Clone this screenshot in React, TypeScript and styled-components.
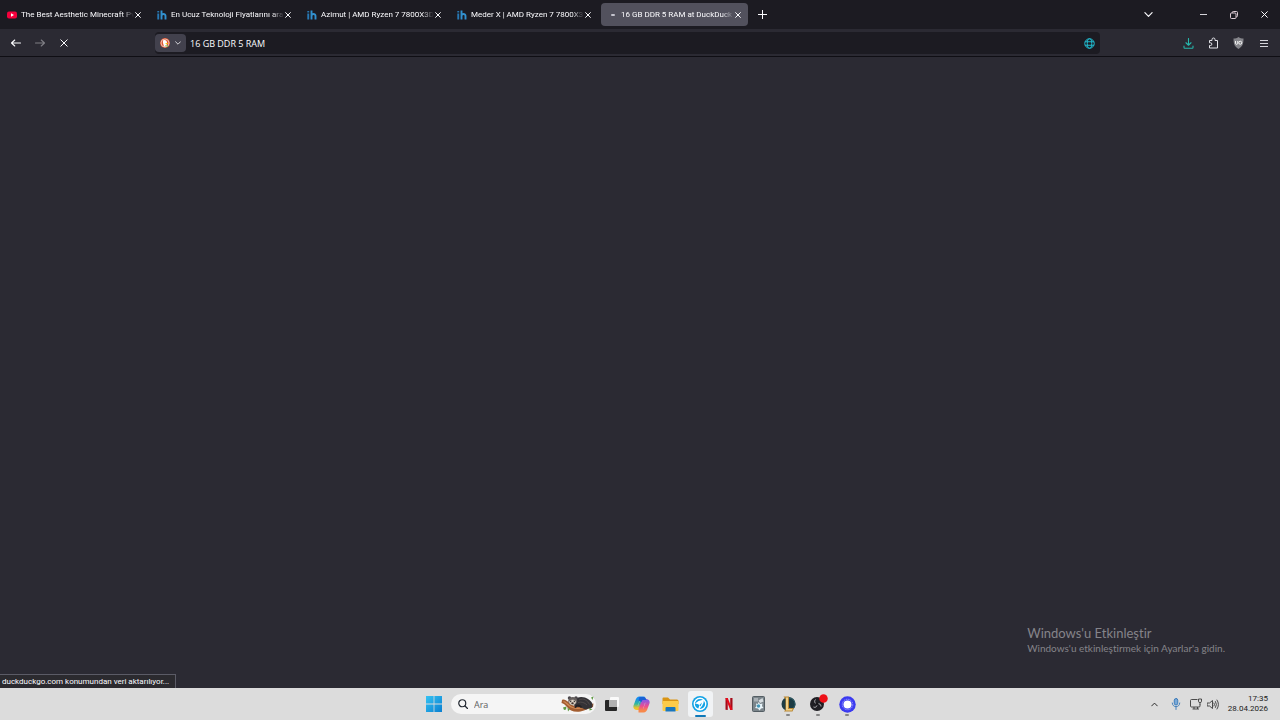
import React from "react";
import styled, { createGlobalStyle, css } from "styled-components";

const GlobalStyle = createGlobalStyle`
  *, *::before, *::after { box-sizing: border-box; }
  body { margin: 0; background: #2b2a33; }
  body, button { font-family: Roboto, "Open Sans", sans-serif; }
  input { font-family: "Open Sans", "Noto Sans", sans-serif; }
  button { margin: 0; padding: 0; border: 0; background: none; color: inherit; cursor: default; }
  svg { display: block; flex: none; }
`;

const Screen = styled.div`
  display: flex;
  flex-direction: column;
  min-height: 100vh;
  color: #fbfbfe;
  overflow: hidden;
`;

const TabBar = styled.header`
  display: flex;
  align-items: center;
  height: 29px;
  padding: 0 1px;
  background: #1c1b22;
`;

const TabList = styled.div`
  display: flex;
  gap: 3px;
  min-width: 0;
`;

const Tab = styled.div<{ $selected?: boolean }>`
  display: flex;
  align-items: center;
  width: 147px;
  height: 23px;
  padding: 0 6px;
  border-radius: 4px;
  font-size: 8px;
  background: ${(p) => (p.$selected ? "#52515d" : "transparent")};
`;

const TabLabel = styled.span`
  flex: 1;
  min-width: 0;
  margin-left: 4px;
  overflow: hidden;
  white-space: nowrap;
  line-height: 16px;
  mask-image: linear-gradient(to left, transparent, #000 12px);
`;

const IconButton = styled.button<{ $w?: number; $dim?: boolean }>`
  display: flex;
  align-items: center;
  justify-content: center;
  flex: none;
  width: ${(p) => p.$w ?? 24}px;
  height: 24px;
  opacity: ${(p) => (p.$dim ? 0.4 : 1)};
`;

const WindowControls = styled.div`
  display: flex;
  align-items: center;
  margin-left: auto;
`;

const ListAllTabs = styled(IconButton)`
  margin-right: 28px;
`;

const NavBar = styled.nav`
  display: flex;
  align-items: center;
  height: 28px;
  padding: 1px 4px 0;
  background: #2b2a33;
  border-bottom: 1px solid #0f0e14;
`;

const ButtonGroup = styled.div`
  display: flex;
  flex: none;
`;

const AddressBar = styled.form`
  display: flex;
  align-items: center;
  flex: 1;
  min-width: 0;
  height: 22px;
  margin: 0 76px 0 79px;
  padding-right: 5px;
  border-radius: 4px;
  background: #1c1b22;
`;

const EngineButton = styled.button`
  display: flex;
  align-items: center;
  justify-content: center;
  gap: 5px;
  width: 31px;
  height: 18px;
  padding-right: 1px;
  border-radius: 4px;
  background: #42414d;
`;

const AddressInput = styled.input`
  flex: 1;
  min-width: 0;
  padding: 0 4px;
  border: 0;
  outline: 0;
  background: none;
  color: #fbfbfe;
  font-size: 9px;
`;

const Page = styled.main`
  position: relative;
  flex: 1;
  background: #2b2a33;
`;

const StatusPanel = styled.div`
  position: absolute;
  left: 0;
  bottom: 0;
  padding: 0 6px 0 2px;
  border: 1px solid #5b5b66;
  border-width: 1px 1px 0 0;
  background: #2b2a2f;
  font-size: 8px;
  line-height: 13px;
`;

const Watermark = styled.aside`
  position: absolute;
  right: 55px;
  bottom: 33px;
  color: #85848a;
  font-family: Lato, "Open Sans", sans-serif;
  font-variant-ligatures: none;
`;

const WatermarkTitle = styled.p`
  margin: 0;
  font-size: 13px;
  line-height: 16px;
`;

const WatermarkText = styled.p`
  margin: 0;
  font-size: 10px;
  line-height: 14px;
`;

const Taskbar = styled.footer`
  display: grid;
  grid-template-columns: 1fr auto 1fr;
  align-items: center;
  height: 32px;
  background: #dcdcdc;
  color: #1b1b1b;
`;

const TaskCenter = styled.div`
  display: flex;
  align-items: center;
  grid-column: 2;
  padding-left: 1px;
`;

const SearchBox = styled.label`
  display: flex;
  align-items: center;
  width: 145px;
  height: 20px;
  margin: 0 1px 0 3px;
  padding: 0 1px 0 7px;
  border-radius: 10px;
  background: #f5f5f5;
`;

const SearchInput = styled.input`
  flex: 1;
  min-width: 0;
  padding: 0 6px;
  border: 0;
  outline: 0;
  background: none;
  font-size: 9px;
  &::placeholder { color: #606060; opacity: 1; }
`;

const AppGrid = styled.div`
  display: grid;
  grid-template-columns: repeat(9, 1fr);
  justify-items: center;
  width: 265px;
`;

const TaskButton = styled.button<{ $active?: boolean; $running?: boolean }>`
  position: relative;
  display: flex;
  align-items: center;
  justify-content: center;
  width: 25px;
  height: 26px;
  border-radius: 3px;
  background: ${(p) => (p.$active ? "#f1f3f5" : "transparent")};
  ${(p) =>
    (p.$active || p.$running) &&
    css`
      &::after {
        content: "";
        position: absolute;
        bottom: ${p.$active ? 0 : 1}px;
        width: ${p.$active ? 11 : 4}px;
        height: 2px;
        border-radius: 1px;
        background: ${p.$active ? "#0f78b8" : "#858585"};
      }
    `}
`;

const Tray = styled.div`
  display: flex;
  align-items: center;
  justify-self: end;
  padding-right: 12px;
`;

const Clock = styled.time`
  margin-left: 6px;
  text-align: right;
  font-size: 8px;
  line-height: 10px;
`;

const Close = ({ size = 6 }: { size?: number }) => (
  <svg width={size} height={size} viewBox="0 0 10 10" stroke="currentColor" strokeWidth={10 / size} strokeLinecap="round">
    <path d="M1 1l8 8M9 1L1 9" />
  </svg>
);

const Chevron = ({ size = 6, up = false }: { size?: number; up?: boolean }) => (
  <svg width={size} height={size} viewBox="0 0 10 10" fill="none" stroke="currentColor" strokeWidth="1.3" strokeLinecap="round" strokeLinejoin="round">
    <path d={up ? "M1 7l4-4 4 4" : "M1 3l4 4 4-4"} />
  </svg>
);

const YouTubeIcon = () => (
  <svg width="10" height="10" viewBox="0 0 20 20">
    <rect y="3" width="20" height="14" rx="4" fill="#f5003c" />
    <path d="M8 6.5v7l6-3.5z" fill="#fff" />
  </svg>
);

const IhIcon = () => (
  <svg width="10" height="10" viewBox="0 0 20 20" fill="none" stroke="#3291d0" strokeWidth="3.8">
    <path d="M2.5 7v12" stroke="#2778b4" />
    <path d="M2.5 2v3" stroke="#2778b4" />
    <path d="M9 1v18M9 12c0-5 8-5.500 8 0v7" />
  </svg>
);

const LoadingIcon = () => (
  <svg width="10" height="10" viewBox="0 0 10 10">
    <rect x="4" y="4" width="4" height="2" rx="1" fill="#c5c4ce" />
  </svg>
);

const Arrow = ({ right = false }: { right?: boolean }) => (
  <svg width="10" height="10" viewBox="0 0 20 20" fill="none" stroke="currentColor" strokeWidth="2.2" strokeLinecap="round" strokeLinejoin="round">
    <path d={right ? "M1 10h18M12.500 4l6.500 6-6.500 6" : "M19 10H1M7.500 4L1 10l6.500 6"} />
  </svg>
);

const DuckIcon = () => (
  <svg width="10" height="10" viewBox="0 0 20 20">
    <circle cx="10" cy="10" r="10" fill="#de5833" />
    <circle cx="10" cy="10" r="8" fill="none" stroke="#f7e4dc" strokeWidth="1.400" />
    <path d="M6 5c4-2.500 8 0 8 4l-1 2 1 6H8C7 13 5 9 6 5z" fill="#fff" />
    <path d="M11 10.500c2-1 4-1 5 0-1 1.500-3 2-5 1.500z" fill="#fdd20a" />
    <path d="M11 14l3 1.500 2-1v2.500l-5-.5z" fill="#4cba3c" />
  </svg>
);

const GlobeIcon = () => (
  <svg width="11" height="11" viewBox="0 0 22 22" fill="none" stroke="#20bcd0" strokeWidth="2">
    <circle cx="11" cy="11" r="9.500" />
    <ellipse cx="11" cy="11" rx="4.500" ry="9.500" />
    <path d="M2 7.500h18M2 14.500h18" />
  </svg>
);

const DownloadIcon = () => (
  <svg width="11" height="11" viewBox="0 0 22 22" fill="none" stroke="#26b8ad" strokeWidth="2.200" strokeLinecap="round" strokeLinejoin="round">
    <path d="M11 1v13M6 9.500l5 5 5-5M2 16v3c0 1 .5 1.500 1.500 1.500h15c1 0 1.500-.5 1.500-1.500v-3" />
  </svg>
);

const PuzzleIcon = () => (
  <svg width="11" height="12" viewBox="0 0 22 24" fill="none" stroke="#e4e4ea" strokeWidth="2" strokeLinejoin="round">
    <path d="M3 7h5V5a3 3 0 0 1 6 0v2h5v15H3v-5h2a2.700 2.700 0 0 0 0-5.400H3z" />
  </svg>
);

const ShieldIcon = () => (
  <svg width="11" height="12" viewBox="0 0 22 24">
    <path d="M11 0c3 2 6 3 10 3 0 11-2 16-10 21C3 19 1 14 1 3c4 0 7-1 10-3z" fill="#85858b" />
    <path d="M5 8v4.500c0 3 4.500 3 4.500 0V8" fill="none" stroke="#fff" strokeWidth="1.800" />
    <circle cx="14.500" cy="11.500" r="3" fill="none" stroke="#fff" strokeWidth="1.800" />
  </svg>
);

const MenuIcon = () => (
  <svg width="8" height="8" viewBox="0 0 8 8" stroke="#d4d4da">
    <path d="M0 1.500h8M0 4.500h8M0 7.500h8" />
  </svg>
);

const PlusIcon = () => (
  <svg width="9" height="9" viewBox="0 0 9 9" stroke="currentColor">
    <path d="M4.500 0v9M0 4.500h9" />
  </svg>
);

const MinimizeIcon = () => (
  <svg width="7" height="7" viewBox="0 0 7 7" stroke="#d5d5da">
    <path d="M0 3.500h7" />
  </svg>
);

const RestoreIcon = () => (
  <svg width="8" height="8" viewBox="0 0 16 16" fill="none" stroke="#dccbd4" strokeWidth="2">
    <rect x="1" y="4" width="11" height="11" rx="2" />
    <path d="M4.500 4V3a2 2 0 0 1 2-2H13a2 2 0 0 1 2 2v6.500a2 2 0 0 1-2 2h-1" />
  </svg>
);

const StartIcon = () => (
  <svg width="16" height="16" viewBox="0 0 16 16">
    <defs>
      <linearGradient id="start" x1="0" y1="0" x2="1" y2="1">
        <stop offset="0" stopColor="#35c3f3" />
        <stop offset="1" stopColor="#0a7fd0" />
      </linearGradient>
    </defs>
    <path d="M0 0h7.600v7.600H0zM8.400 0H16v7.600H8.400zM0 8.400h7.600V16H0zM8.400 8.400H16V16H8.400z" fill="url(#start)" />
  </svg>
);

const SearchIcon = () => (
  <svg width="10" height="10" viewBox="0 0 20 20" fill="none" stroke="#222831" strokeWidth="2.400" strokeLinecap="round">
    <circle cx="8.500" cy="8.500" r="7" />
    <path d="M14 14l5 5" />
  </svg>
);

const SlothIcon = () => (
  <svg width="34" height="18" viewBox="0 0 68 36">
    <path d="M2 10c6-3 11 3 17 8 8 5 17 7 26 4 8-2 13-4 20-5l-1 7c-8 2-15 7-25 9-13 2-22-2-27-9C8 19 5 17 1 16z" fill="#a35d30" />
    <path d="M5 13c6 1 9 9 18 12 8 3 15 2 22 0" fill="none" stroke="#d08b57" strokeWidth="2.500" />
    <path d="M26 11C33 1 47 3 54 8c8 5 11 11 8 17-4 4-7 1-9 3-3 2-8 0-13-4-7 0-13-1-16-5z" fill="#343236" />
    <path d="M36 10c9-5 17 1 21 9M34 15c7-2 13 0 18 5" fill="none" stroke="#585250" strokeWidth="1.500" />
    <circle cx="17" cy="6" r="3.500" fill="#49454a" />
    <circle cx="30" cy="6" r="3.500" fill="#49454a" />
    <ellipse cx="23.500" cy="12" rx="9" ry="8" fill="#66605f" />
    <path d="M16 13c4-5 11-5 14 0 0 5-4 7-7 7s-7-2-7-7z" fill="#ded3c4" />
    <path d="M17 12l4-1-1 4zM25 11l4 1-3 3z" fill="#2b2527" />
    <ellipse cx="23" cy="16.500" rx="2.500" ry="1.800" fill="#3d2f2d" />
    <path d="M29 24c3-4 8-4 11 0" fill="none" stroke="#242225" strokeWidth="4" strokeLinecap="round" />
    <path d="M4 25l7-2-1 6-4 1zM13 26l5 2-4 5zM60 5l5-2-2 7zM63 29l-6-3v5z" fill="#5f9b43" />
  </svg>
);

const TaskViewIcon = () => (
  <svg width="16" height="16" viewBox="0 0 16 16">
    <rect x="1" y="4" width="12" height="11" rx="1" fill="#262626" />
    <rect x="6" y="1" width="9" height="10" rx="1" fill="#fafafa" />
    <path d="M5 4h8v7H5z" fill="#b1b1b1" />
  </svg>
);

const CopilotIcon = () => (
  <svg width="17" height="17" viewBox="0 0 34 34" fill="none" strokeWidth="8" strokeLinejoin="round">
    <defs>
      <linearGradient id="copA" x1="0" y1="0" x2="0" y2="1">
        <stop offset="0" stopColor="#168df0" />
        <stop offset=".55" stopColor="#2fb8a0" />
        <stop offset="1" stopColor="#f0c22a" />
      </linearGradient>
      <linearGradient id="copB" x1="0" y1="0" x2="0" y2="1">
        <stop offset="0" stopColor="#9557dd" />
        <stop offset=".55" stopColor="#ec4d8f" />
        <stop offset="1" stopColor="#f7884b" />
      </linearGradient>
    </defs>
    <path d="M21 5h-8c-3 0-4 3-5 7l-3 8c-1 3 1 4 3 4h5l5-15c1-3 2-4 5-4" stroke="url(#copA)" />
    <path d="M13 29h8c3 0 4-3 5-7l3-8c1-3-1-4-3-4h-5l-5 15c-1 3-2 4-5 4" stroke="url(#copB)" />
    <path d="M13 2h9c3 0 4 3 5 6h-8l-2 4-6-3z" fill="#1a61d5" />
  </svg>
);

const FolderIcon = () => (
  <svg width="17" height="15" viewBox="0 0 34 30">
    <path d="M1 3q0-2 2-2h9l4 4h14q3 0 3 3v6H1z" fill="#d99413" />
    <path d="M1 8h32v18q0 2-2 2H3q-2 0-2-2z" fill="#fdcb48" />
    <path d="M7 22q0-2 2-2h16q2 0 2 2v7H7z" fill="#1976bd" />
  </svg>
);

const LibreWolfIcon = () => (
  <svg width="16" height="16" viewBox="0 0 32 32">
    <circle cx="16" cy="16" r="16" fill="#12a2e5" />
    <circle cx="16" cy="16" r="11.500" fill="none" stroke="#fff" strokeWidth="2.600" />
    <path d="M6 15l7-5 11-3-1 7-3 6-5 6-3 1 3-9-4-2z" fill="#fff" />
    <path d="M15 18l5-5-3 8z" fill="#12a2e5" />
  </svg>
);

const NetflixIcon = () => (
  <svg width="8" height="12" viewBox="0 0 16 24">
    <path d="M1 0h4.500v24L1 23.500zM10.500 0H15v23.500l-4.500.5z" fill="#a50a18" />
    <path d="M1 0h4.500L15 23.500l-4.500.5z" fill="#e50919" />
  </svg>
);

const ToolIcon = () => (
  <svg width="13" height="16" viewBox="0 0 26 32">
    <rect x="1" y="1" width="24" height="30" rx="2" fill="#7b858b" stroke="#535d63" strokeWidth="2" />
    <path d="M4 4h8v7H4z" fill="#a9b0b5" />
    <path d="M13 9l8-5 2 7-7 3z" fill="#d5dce0" />
    <path d="M13 12l3 4 5-1-1 5 3 4-5 1-3 4-3-4-6-1 3-4-1-5 4 1z" fill="#e9f5fa" />
    <circle cx="13" cy="20" r="3.500" fill="#4496b7" />
  </svg>
);

const LeagueIcon = () => (
  <svg width="16" height="17" viewBox="0 0 32 34">
    <circle cx="17" cy="16" r="14" fill="#1c3c44" />
    <path d="M18 4a12 12 0 0 1 9 20" fill="none" stroke="#2d5c66" strokeWidth="2" />
    <path d="M7 1h11v23h10l-3 7H8l3-4V6z" fill="#b98835" />
    <path d="M12 3h4v23h9l-1 3H12z" fill="#efd18a" />
  </svg>
);

const ObsIcon = () => (
  <svg width="20" height="20" viewBox="0 0 40 40">
    <circle cx="18" cy="20" r="14" fill="#201f24" />
    <path d="M18 20c-5-1-6-6-3-9M18 20c5-2 8 1 8 5M18 20c1 5-3 8-7 6" fill="none" stroke="#b4b4b8" strokeWidth="2" />
    <circle cx="18" cy="20" r="3" fill="#17161a" />
    <circle cx="31" cy="9" r="8.500" fill="#ee1118" />
  </svg>
);

const SignalIcon = () => (
  <svg width="17" height="17" viewBox="0 0 34 34">
    <circle cx="17" cy="17" r="16.500" fill="#3b3af0" />
    <circle cx="17" cy="17" r="10.500" fill="none" stroke="#a9acff" strokeWidth="1.600" strokeDasharray="3 1.500" />
    <circle cx="17" cy="17" r="8" fill="#fff" />
  </svg>
);

const MicIcon = () => (
  <svg width="10" height="12" viewBox="0 0 20 24" fill="none" stroke="#3577b8" strokeWidth="1.800" strokeLinecap="round">
    <rect x="6.500" y="1" width="7" height="13" rx="3.500" fill="#79a9d8" />
    <path d="M2.500 10c0 10 15 10 15 0M10 18v5" />
  </svg>
);

const NetworkIcon = () => (
  <svg width="12" height="12" viewBox="0 0 24 24" fill="none" stroke="#3a3a3a" strokeWidth="1.800">
    <path d="M15 3H3Q1 3 1 5v11q0 2 2 2h15q2 0 2-2v-4M5 22h13M8 18v4M15 18v4" />
    <path d="M17 2h6v5q0 2-3 2t-3-2zM20 9v4" />
  </svg>
);

const VolumeIcon = () => (
  <svg width="12" height="11" viewBox="0 0 24 22" fill="none" stroke="#3a3a3a" strokeWidth="1.800" strokeLinecap="round" strokeLinejoin="round">
    <path d="M1 8h4l6-5v16l-6-5H1zM14 8q2 3 0 6M17 5q4 6 0 12M20 2q6 9 0 18" />
  </svg>
);

const tabs = [
  { title: "The Best Aesthetic Minecraft Pv", icon: <YouTubeIcon /> },
  { title: "En Ucuz Teknoloji Fiyatlarını ara", icon: <IhIcon /> },
  { title: "Azimut | AMD Ryzen 7 7800X3D", icon: <IhIcon /> },
  { title: "Meder X | AMD Ryzen 7 7800X3", icon: <IhIcon /> },
  { title: "16 GB DDR 5 RAM at DuckDuck", icon: <LoadingIcon />, selected: true },
];

const apps = [
  { name: "Görev görünümü", icon: <TaskViewIcon /> },
  { name: "Copilot", icon: <CopilotIcon /> },
  { name: "Dosya Gezgini", icon: <FolderIcon /> },
  { name: "LibreWolf", icon: <LibreWolfIcon />, active: true },
  { name: "Netflix", icon: <NetflixIcon /> },
  { name: "Araçlar", icon: <ToolIcon /> },
  { name: "League of Legends", icon: <LeagueIcon />, running: true },
  { name: "OBS Studio", icon: <ObsIcon />, running: true },
  { name: "Signal", icon: <SignalIcon />, running: true },
];

export default function App() {
  return (
    <Screen>
      <GlobalStyle />
      <TabBar>
        <TabList role="tablist">
          {tabs.map((tab) => (
            <Tab key={tab.title} role="tab" aria-selected={!!tab.selected} $selected={tab.selected}>
              {tab.icon}
              <TabLabel>{tab.title}</TabLabel>
              <IconButton $w={8} aria-label="Sekmeyi kapat"><Close /></IconButton>
            </Tab>
          ))}
        </TabList>
        <IconButton $w={29} aria-label="Yeni sekme"><PlusIcon /></IconButton>
        <WindowControls>
          <ListAllTabs aria-label="Tüm sekmeleri listele"><Chevron size={9} /></ListAllTabs>
          <IconButton $w={31} aria-label="Simge durumuna küçült"><MinimizeIcon /></IconButton>
          <IconButton $w={30} aria-label="Önceki boyut"><RestoreIcon /></IconButton>
          <IconButton $w={30} aria-label="Kapat"><Close size={7} /></IconButton>
        </WindowControls>
      </TabBar>
      <NavBar>
        <ButtonGroup>
          <IconButton aria-label="Geri"><Arrow /></IconButton>
          <IconButton aria-label="İleri" $dim><Arrow right /></IconButton>
          <IconButton aria-label="Durdur"><Close size={8} /></IconButton>
        </ButtonGroup>
        <AddressBar onSubmit={(e) => e.preventDefault()}>
          <EngineButton type="button" aria-label="Arama motoru"><DuckIcon /><Chevron /></EngineButton>
          <AddressInput aria-label="Adres" defaultValue="16 GB DDR 5 RAM" spellCheck={false} />
          <GlobeIcon />
        </AddressBar>
        <ButtonGroup>
          <IconButton $w={25} aria-label="İndirmeler"><DownloadIcon /></IconButton>
          <IconButton $w={25} aria-label="Uzantılar"><PuzzleIcon /></IconButton>
          <IconButton $w={25} aria-label="uBlock Origin"><ShieldIcon /></IconButton>
          <IconButton $w={25} aria-label="Menü"><MenuIcon /></IconButton>
        </ButtonGroup>
      </NavBar>
      <Page>
        <StatusPanel role="status">duckduckgo.com konumundan veri aktarılıyor...</StatusPanel>
        <Watermark>
          <WatermarkTitle>Windows'u Etkinleştir</WatermarkTitle>
          <WatermarkText>Windows'u etkinleştirmek için Ayarlar'a gidin.</WatermarkText>
        </Watermark>
      </Page>
      <Taskbar>
        <TaskCenter>
          <IconButton $w={29} aria-label="Başlat"><StartIcon /></IconButton>
          <SearchBox>
            <SearchIcon />
            <SearchInput aria-label="Ara" placeholder="Ara" />
            <SlothIcon />
          </SearchBox>
          <AppGrid>
            {apps.map((app) => (
              <TaskButton key={app.name} aria-label={app.name} $active={app.active} $running={app.running}>
                {app.icon}
              </TaskButton>
            ))}
          </AppGrid>
        </TaskCenter>
        <Tray>
          <IconButton $w={20} aria-label="Gizli simgeleri göster"><Chevron size={7} up /></IconButton>
          <IconButton $w={22} aria-label="Mikrofon"><MicIcon /></IconButton>
          <IconButton $w={18} aria-label="Ağ"><NetworkIcon /></IconButton>
          <IconButton $w={17} aria-label="Ses"><VolumeIcon /></IconButton>
          <Clock dateTime="2026-04-28T17:35">17:35<br />28.04.2026</Clock>
        </Tray>
      </Taskbar>
    </Screen>
  );
}
